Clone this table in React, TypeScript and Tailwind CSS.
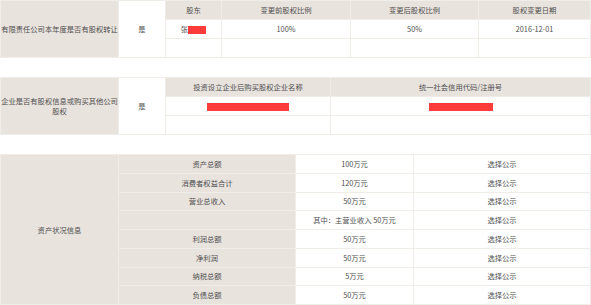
import type { ReactNode } from "react";

const font = { fontFamily: '"Noto Sans CJK SC", "Liberation Sans", sans-serif' };

function Cell({ children, head, className = "h-[19px]", rowSpan }: { children?: ReactNode; head?: boolean; className?: string; rowSpan?: number }) {
  return (
    <td
      rowSpan={rowSpan}
      className={`border border-[#f0ece8] p-0 text-center align-middle text-[7.3px] leading-[10px] text-[#4f4f4f] ${head ? "bg-[#e9e3dd]" : "bg-white"} ${className}`}
    >
      {children}
    </td>
  );
}

function Redacted({ w }: { w: number }) {
  return <span className="inline-block h-[8px] bg-[#ff3b3b] align-middle" style={{ width: w }} />;
}

const assets = [
  ["资产总额", "100万元"],
  ["消费者权益合计", "120万元"],
  ["营业总收入", "50万元"],
  ["", "其中：主营业收入 50万元"],
  ["利润总额", "50万元"],
  ["净利润", "50万元"],
  ["纳税总额", "5万元"],
  ["负债总额", "50万元"],
];

export default function App() {
  return (
    <div className="flex w-[591px] flex-col bg-white" style={font}>
      <table className="w-[591px] table-fixed border-collapse">
        <colgroup>
          <col className="w-[118px]" />
          <col className="w-[47px]" />
          <col className="w-[56px]" />
          <col className="w-[129px]" />
          <col className="w-[128px]" />
          <col />
        </colgroup>
        <tbody>
          <tr>
            <Cell head rowSpan={3}>有限责任公司本年度是否有股权转让</Cell>
            <Cell rowSpan={3}>是</Cell>
            <Cell head>股东</Cell>
            <Cell head>变更前股权比例</Cell>
            <Cell head>变更后股权比例</Cell>
            <Cell head>股权变更日期</Cell>
          </tr>
          <tr>
            <Cell>
              张<Redacted w={18} />
            </Cell>
            <Cell>100%</Cell>
            <Cell>50%</Cell>
            <Cell>2016-12-01</Cell>
          </tr>
          <tr>
            <Cell />
            <Cell />
            <Cell />
            <Cell />
          </tr>
        </tbody>
      </table>

      <table className="mt-[19px] w-[591px] table-fixed border-collapse">
        <colgroup>
          <col className="w-[118px]" />
          <col className="w-[47px]" />
          <col className="w-[165px]" />
          <col />
        </colgroup>
        <tbody>
          <tr>
            <Cell head rowSpan={3}>
              企业是否有股权信息或购买其他公司
              <br />
              股权
            </Cell>
            <Cell rowSpan={3}>是</Cell>
            <Cell head>投资设立企业后购买股权企业名称</Cell>
            <Cell head>统一社会信用代码/注册号</Cell>
          </tr>
          <tr>
            <Cell>
              <Redacted w={82} />
            </Cell>
            <Cell>
              <Redacted w={64} />
            </Cell>
          </tr>
          <tr>
            <Cell />
            <Cell />
          </tr>
        </tbody>
      </table>

      <table className="mt-[19px] w-[591px] table-fixed border-collapse">
        <colgroup>
          <col className="w-[118px]" />
          <col className="w-[177px]" />
          <col className="w-[118px]" />
          <col />
        </colgroup>
        <tbody>
          {assets.map(([label, value], i) => (
            <tr key={i}>
              {i === 0 && (
                <Cell head rowSpan={assets.length}>
                  资产状况信息
                </Cell>
              )}
              <Cell head className="h-[18.75px]">{label}</Cell>
              <Cell className="h-[18.75px]">{value}</Cell>
              <Cell className="h-[18.75px]">选择公示</Cell>
            </tr>
          ))}
        </tbody>
      </table>
    </div>
  );
}
